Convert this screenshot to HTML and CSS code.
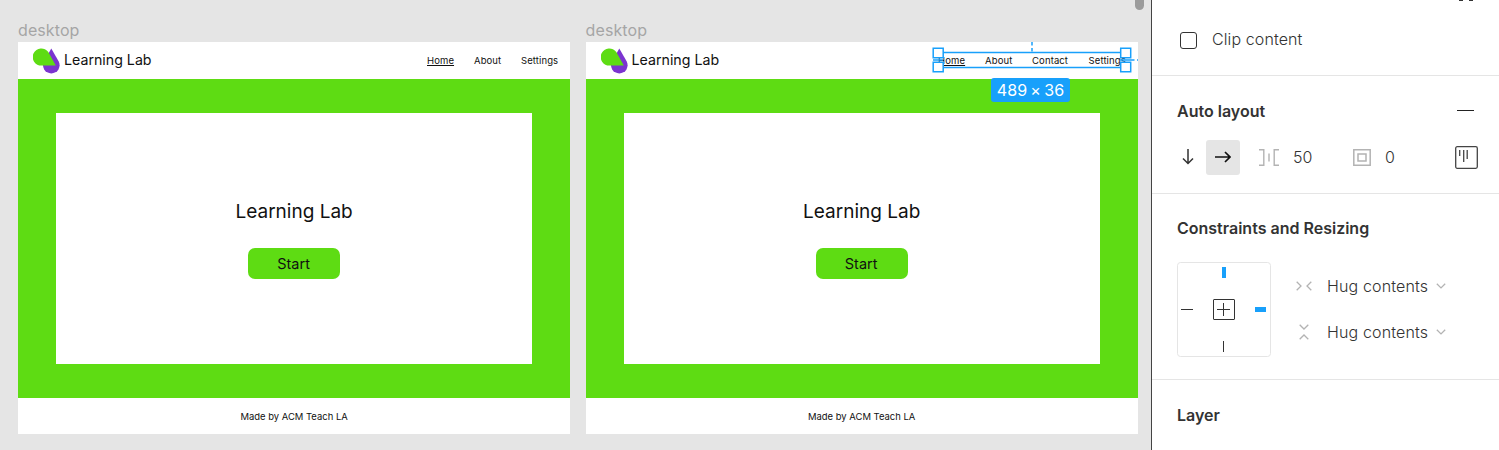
FILE: index.html
```html
<!DOCTYPE html>
<html lang="en">
<head>
<meta charset="utf-8">
<title>Learning Lab design file</title>
<link rel="stylesheet" href="styles.css">
</head>
<body>
<div class="app">
  <main class="canvas">
    <div class="scroll-thumb"></div>
    <section class="frame">
      <div class="frame-label">desktop</div>
      <div class="artboard">
        <header class="site-header">
          <svg class="logo" width="28" height="26" viewBox="0 0 28 26"><path d="M18.300 .6 25.600 13.200A8.300 8.300 0 1 1 11 13.200Z" fill="#7b34d0"/><path d="M15.300 4 22.800 17.600H8.600A8.600 8.600 0 1 1 15.300 4Z" fill="#5edc13"/></svg>
          <span class="brand">Learning Lab</span>
          <nav class="nav"><a class="current home">Home</a><a class="about">About</a><a class="settings">Settings</a></nav>
        </header>
        <div class="hero"><div class="card"><h1 class="title">Learning Lab</h1><div class="start"><span>Start</span></div></div></div>
        <footer class="site-footer"><span>Made by ACM Teach LA</span></footer>
      </div>
    </section>
    <section class="frame">
      <div class="frame-label">desktop</div>
      <div class="artboard">
        <header class="site-header">
          <svg class="logo" width="28" height="26" viewBox="0 0 28 26"><path d="M18.300 .6 25.600 13.200A8.300 8.300 0 1 1 11 13.200Z" fill="#7b34d0"/><path d="M15.300 4 22.800 17.600H8.600A8.600 8.600 0 1 1 15.300 4Z" fill="#5edc13"/></svg>
          <span class="brand">Learning Lab</span>
          <nav class="nav"><a class="current home">Home</a><a class="about">About</a><a class="contact">Contact</a><a class="settings">Settings</a></nav>
        </header>
        <div class="hero"><div class="card"><h1 class="title">Learning Lab</h1><div class="start"><span>Start</span></div></div></div>
        <footer class="site-footer"><span>Made by ACM Teach LA</span></footer>
      </div>
    </section>
    <svg class="selection" width="210" height="36" viewBox="930 40 210 36" fill="none" stroke="#18a0fb" stroke-width="1.5">
      <path d="M938 52.500H1126M938 67.500H1126M933 60H943M1120 60H1131"/>
      <path d="M1032 42v10M1131 60h7" stroke-dasharray="3.500 2.500"/>
      <g fill="#fff"><path d="M933.200 48.200h10v9.600h-10zM933.200 62.200h10v9.600h-10zM1120.700 48.200h10v9.600h-10zM1120.700 62.200h10v9.600h-10z"/></g>
    </svg>
    <div class="size-badge"><span>489 × 36</span></div>
  </main>
  <aside class="panel">
    <section class="section clip">
      <svg class="clipped-icon" width="16" height="2" viewBox="0 0 16 2"><path d="M1 0h4v1H1zM11 0h4v1h-4z" fill="#333"/></svg>
      <span class="checkbox"></span><span class="label clip-label">Clip content</span>
    </section>
    <section class="section auto">
      <div class="heading-row"><h2 class="auto-title">Auto layout</h2><span class="minus"></span></div>
      <div class="controls">
        <svg class="down" width="12" height="16" viewBox="0 0 12 16" fill="none" stroke="#333" stroke-width="1.5"><path d="M6 0v14M1 9.500 6 14.500l5-5"/></svg>
        <span class="direction"><svg width="16" height="12" viewBox="0 0 16 12" fill="none" stroke="#111" stroke-width="1.7"><path d="M0 6h14.500M10 1l5 5-5 5"/></svg></span>
        <svg class="spacing" width="20" height="17" viewBox="0 0 20 17" fill="none" stroke="#b3b3b3" stroke-width="1.4"><path d="M0 .8h4.800v15.400H0M10 4.500v8M20 .8h-4.800v15.400H20"/></svg>
        <span class="label gap-value">50</span>
        <svg class="padding-icon" width="18" height="17" viewBox="0 0 18 17" fill="none" stroke="#b3b3b3" stroke-width="1.5"><path d="M.8.8h16.400v15.400H.8zM5 5h8v7H5z"/></svg>
        <span class="label pad-value">0</span>
        <svg class="align" width="23" height="23" viewBox="0 0 23 23" fill="none" stroke="#444" stroke-width="1.3"><rect x=".7" y=".7" width="21.600" height="21.600" rx="1.5"/><path d="M4.700 4v6M8.700 4v12M12.200 4v9"/></svg>
      </div>
    </section>
    <section class="section constraints">
      <h2 class="constraints-title">Constraints and Resizing</h2>
      <div class="constraint-body">
        <svg class="pins" width="94" height="95" viewBox="0 0 94 95" fill="none" stroke="#333"><rect x=".5" y=".5" width="93" height="94" rx="3" stroke="#e5e5e5"/><rect x="36.500" y="37.500" width="21" height="20" rx=".5"/><path d="M40 47.500h13M46.500 41v13M4 47.500h12M46.500 79v11"/><path d="M45 5h4v11h-4zM78 45h11v5H78z" fill="#18a0fb" stroke="none"/></svg>
        <div class="resizing">
          <div class="resize-row"><svg width="16" height="16" viewBox="0 0 16 16" fill="none" stroke="#b3b3b3" stroke-width="1.3"><path d="M.7 3.700 5 8 .7 12.300M15.300 3.700 11 8l4.300 4.300"/></svg><span class="label hug">Hug contents</span><svg class="chevron" width="10" height="6" viewBox="0 0 10 6" fill="none" stroke="#b3b3b3" stroke-width="1.3"><path d="m.8.7 4.200 4.200L9.200.7"/></svg></div>
          <div class="resize-row"><svg width="16" height="16" viewBox="0 0 16 16" fill="none" stroke="#b3b3b3" stroke-width="1.3"><path d="M3.700.7 8 5 12.300.7M3.700 15.300 8 11l4.300 4.300"/></svg><span class="label hug">Hug contents</span><svg class="chevron" width="10" height="6" viewBox="0 0 10 6" fill="none" stroke="#b3b3b3" stroke-width="1.3"><path d="m.8.7 4.200 4.200L9.200.7"/></svg></div>
        </div>
      </div>
    </section>
    <section class="section layer"><h2 class="layer-title">Layer</h2></section>
  </aside>
</div>
</body>
</html>
```
FILE: styles.css
```css
* { box-sizing: border-box; }
body { margin: 0; font-family: Inter, sans-serif; overflow: hidden; }
svg { display: block; flex: none; }
span, a { white-space: nowrap; }
h1, h2 { margin: 0; }
.app { display: flex; width: 1499px; height: 450px; }
.canvas { position: relative; flex: none; width: 1151px; background: #e5e5e5; display: flex; gap: 15.400px; padding: 20px 0 0 18px; }
.frame { flex: none; width: 552.200px; }
.frame-label { height: 22px; line-height: 21px; font-size: 16px; letter-spacing: 0.1px; color: #a5a5a5; }
.artboard { height: 392.400px; background: #fff; color: #111; }
.site-header { height: 37px; display: flex; align-items: center; padding: 0 11.500px 0 15px; }
.logo { margin-top: 1px; }
.brand { margin: -2px 0 0 3px; font-size: 14.200px; line-height: 20px; }
.nav { margin: 0 0 0 auto; display: flex; font-size: 9.500px; line-height: 14px; letter-spacing: 0.1px; }
.home { width: 47px; }
.about { width: 47px; }
.contact { width: 56.500px; }
.settings { width: 37.700px; }
.current { text-decoration: underline; text-decoration-thickness: 1px; text-underline-offset: 1px; }
.hero { height: 319px; background: #5edc13; padding: 34.400px 38.200px; }
.card { height: 251px; background: #fff; display: flex; flex-direction: column; align-items: center; padding-top: 84.600px; }
.title { font-weight: 400; font-size: 19px; line-height: 28px; }
.start { margin-top: 22.400px; width: 92px; height: 31px; border-radius: 7px; background: #5edc13; display: flex; align-items: center; justify-content: center; font-size: 14.500px; }
.start span { margin-right: 1px; }
.site-footer { height: 36.400px; display: flex; align-items: center; justify-content: center; font-size: 9.450px; }
.scroll-thumb { position: absolute; left: 1135px; top: -10px; width: 9px; height: 20px; border-radius: 5px; background: #9b9b9b; }
.selection { position: absolute; left: 930px; top: 40px; }
.size-badge { position: absolute; left: 991px; top: 78px; width: 79px; height: 24px; border-radius: 3px; background: #18a0fb; color: #fff; font-size: 16px; letter-spacing: 0.1px; word-spacing: -1.500px; display: flex; align-items: center; justify-content: center; }
.panel { flex: 1; border-left: 1px solid #444; background: #fff; color: #333; }
.section { padding-left: 25px; border-bottom: 1px solid #e5e5e5; }
.label { font-size: 16px; font-weight: 300; line-height: 20px; }
h2 { font-size: 16px; font-weight: 600; line-height: 20px; }
.clip { position: relative; height: 76px; display: flex; padding: 29px 0 0 27px; }
.clipped-icon { position: absolute; left: 306px; top: 0; }
.checkbox { width: 17px; height: 17px; margin: 3px 15px 0 1px; border: 1.500px solid #333; border-radius: 3px; }
.clip-label { letter-spacing: 0.1px; }
.auto { height: 118px; padding-top: 25px; }
.heading-row { display: flex; align-items: center; justify-content: space-between; padding-right: 25px; }
.minus { width: 17px; height: 1px; margin-top: -1px; background: #222; }
.controls { height: 35px; margin-top: 19px; display: flex; align-items: center; }
.down { margin: -2px 0 0 5px; }
.direction { width: 34px; height: 35px; margin-left: 12px; border-radius: 3px; background: #e5e5e5; display: flex; align-items: center; justify-content: center; }
.direction svg { margin-top: -1px; }
.spacing { margin-left: 19px; }
.gap-value { width: 60px; margin: -2px 0 0 14px; }
.pad-value { width: 70px; margin: -2px 0 0 14px; }
.constraints { height: 186px; padding-top: 24px; }
.constraint-body { display: flex; margin-top: 24px; }
.resizing { margin-left: 25px; padding-top: 14px; display: flex; flex-direction: column; gap: 26px; }
.resize-row { display: flex; align-items: center; height: 20px; }
.hug { width: 109px; margin-left: 15px; letter-spacing: 0.15px; }
.layer { padding-top: 25px; border: 0; }
```
